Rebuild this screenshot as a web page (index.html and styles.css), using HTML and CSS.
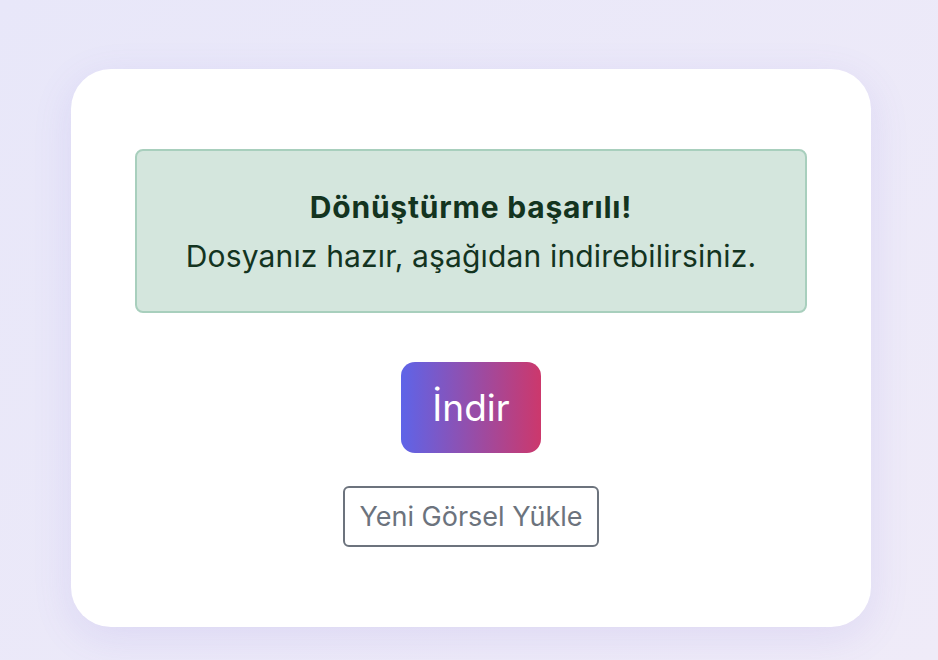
FILE: index.html
```html
<!DOCTYPE html>
<html lang="tr">

<head>
  <meta charset="UTF-8">
  <title>Dönüştürme başarılı</title>
  <link rel="stylesheet" href="styles.css">
</head>

<body>
  <main class="card">
    <div class="alert">
      <strong class="alert-title">Dönüştürme başarılı!</strong>
      <span class="alert-text">Dosyanız hazır, aşağıdan indirebilirsiniz.</span>
    </div>
    <a class="btn-download" href="#">İndir</a>
    <a class="btn-outline" href="#">Yeni Görsel Yükle</a>
  </main>
</body>

</html>
```

FILE: styles.css
```css
body {
  margin: 0;
  min-height: 100vh;
  background: linear-gradient(135deg, #e8e7f9, #efebf8);
  font-family: Inter, 'Noto Sans', sans-serif;
  display: flex;
  justify-content: center;
  padding: 69px 0 0 4px;
  box-sizing: border-box;
}

.card {
  width: 800px;
  height: 558px;
  box-sizing: border-box;
  background: #fff;
  border-radius: 40px;
  box-shadow: 0 10px 40px rgba(110, 90, 210, 0.12);
  padding: 80px 64px;
  display: flex;
  flex-direction: column;
  align-items: center;
}

.alert {
  width: 100%;
  box-sizing: border-box;
  background: #d4e6dd;
  border: 2px solid #a8cfbd;
  border-radius: 8px;
  color: #13341f;
  text-align: center;
  padding: 34px 16px 32px;
  font-size: 30px;
  line-height: 45px;
  display: flex;
  flex-direction: column;
  gap: 4px;
}

.alert-title {
  font-weight: 700;
  letter-spacing: 0.8px;
}

.alert-text {
  letter-spacing: 0.15px;
}

.btn-download {
  margin-top: 49px;
  width: 140px;
  height: 91px;
  border-radius: 14px;
  background: linear-gradient(90deg, #5e64e8, #cc386c);
  color: #fff;
  font-size: 37px;
  text-decoration: none;
  display: flex;
  align-items: center;
  justify-content: center;
}

.btn-outline {
  margin-top: 33px;
  width: 256px;
  height: 61px;
  box-sizing: border-box;
  border: 2px solid #6c737d;
  border-radius: 6px;
  color: #6c737d;
  font-size: 27px;
  text-decoration: none;
  display: flex;
  align-items: center;
  justify-content: center;
}
```
